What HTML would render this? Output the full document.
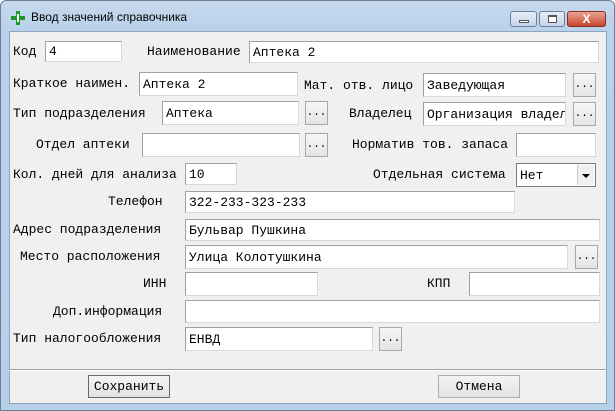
<!DOCTYPE html>
<html><head><meta charset="utf-8"><style>
*{box-sizing:border-box;margin:0;padding:0}
body{width:615px;height:411px;overflow:hidden;background:#fff;font-family:"Liberation Mono","DejaVu Sans Mono",monospace;font-size:13px;color:#000}
.win{position:absolute;left:0;top:0;width:615px;height:411px;border-radius:6px 6px 0 0;background:linear-gradient(#c6d9ee,#b9d1ea 30px,#b7cfe8);border:1px solid #6b7f98}
.title{position:absolute;left:30px;top:9px;font-family:"Liberation Sans",sans-serif;font-size:12px;color:#000}
.client{position:absolute;left:8px;top:30px;width:598px;height:373px;background:#f0f0f0;border:1px solid #8fa4bd}
.a{position:absolute;white-space:nowrap}
.l{position:absolute;white-space:nowrap;line-height:16px}
.i{position:absolute;background:#fff;border:1px solid #d8d8d8;border-top-color:#a0a0a0;border-left-color:#a0a0a0;padding-left:3px;display:flex;align-items:center;overflow:hidden;white-space:nowrap}
.b{position:absolute;width:23px;height:24px;background:linear-gradient(#f6f6f6,#e4e4e4);border:1px solid #a8a8a8;text-align:center;font-size:11px;line-height:22px}
.btn{position:absolute;height:23px;background:linear-gradient(#f4f4f4,#e2e2e2);border:1px solid #8e8e8e;text-align:center;line-height:21px}
.wb{position:absolute;top:10px;height:16px;border:1px solid #6d7f99;border-radius:3px;background:linear-gradient(#e6eef8,#c3d3e7)}
</style></head><body>
<div class="win">
<svg style="position:absolute;left:10px;top:10px" width="14" height="14"><path d="M5 0h4v5h5v4H9v5H5V9H0V5h5z" fill="#1a9a2a"/><path d="M6 3h2v8H6z" fill="#fff"/></svg>
<div class="title">Ввод значений справочника</div>
<div class="wb" style="left:509px;width:27px"><div style="position:absolute;left:8px;top:8px;width:10px;height:3px;background:#fff;border:1px solid #555"></div></div>
<div class="wb" style="left:538px;width:26px"><div style="position:absolute;left:8px;top:3px;width:9px;height:8px;background:#fff;border:1px solid #555;border-top-width:2px"></div></div>
<div class="wb" style="left:566px;width:39px;background:linear-gradient(#e8a293,#c9462f);border-color:#8a2b1e;color:#fff;font:bold 12px 'Liberation Sans',sans-serif;text-align:center;line-height:14px">X</div>
<div class="client"></div>
</div>
<div class="l" style="left:13px;top:44px">Код</div>
<div class="i" style="left:45px;top:41px;width:77px;height:21px">4</div>
<div class="l" style="left:147px;top:44px">Наименование</div>
<div class="i" style="left:249px;top:41px;width:350px;height:22px">Аптека 2</div>
<div class="l" style="left:13px;top:76px">Краткое наимен.</div>
<div class="i" style="left:139px;top:72px;width:159px;height:24px">Аптека 2</div>
<div class="l" style="left:304px;top:78px">Мат. отв. лицо</div>
<div class="i" style="left:423px;top:73px;width:143px;height:24px">Заведующая</div>
<div class="b" style="left:573px;top:73px">...</div>
<div class="l" style="left:13px;top:106px">Тип подразделения</div>
<div class="i" style="left:162px;top:101px;width:137px;height:24px">Аптека</div>
<div class="b" style="left:305px;top:101px">...</div>
<div class="l" style="left:349px;top:106px">Владелец</div>
<div class="i" style="left:423px;top:102px;width:143px;height:24px">Организация владелец</div>
<div class="b" style="left:573px;top:102px">...</div>
<div class="l" style="left:36px;top:137px">Отдел аптеки</div>
<div class="i" style="left:142px;top:133px;width:158px;height:24px"></div>
<div class="b" style="left:305px;top:133px">...</div>
<div class="l" style="left:352px;top:137px">Норматив тов. запаса</div>
<div class="i" style="left:516px;top:133px;width:80px;height:24px"></div>
<div class="l" style="left:13px;top:167px">Кол. дней для анализа</div>
<div class="i" style="left:185px;top:163px;width:52px;height:22px">10</div>
<div class="l" style="left:373px;top:167px">Отдельная система</div>
<div class="i" style="left:516px;top:163px;width:80px;height:24px;border:1px solid #7a7a7a">Нет<div style="position:absolute;right:1px;top:1px;width:17px;height:20px;background:#f0f0f0;border-left:1px solid #ccc"><svg width="17" height="20"><path d="M4 9h8l-4 4z" fill="#000"/></svg></div></div>
<div class="l" style="left:108px;top:194px">Телефон</div>
<div class="i" style="left:185px;top:191px;width:330px;height:22px">322-233-323-233</div>
<div class="l" style="left:13px;top:222px">Адрес подразделения</div>
<div class="i" style="left:185px;top:219px;width:415px;height:22px">Бульвар Пушкина</div>
<div class="l" style="left:20px;top:249px">Место расположения</div>
<div class="i" style="left:185px;top:245px;width:383px;height:24px">Улица Колотушкина</div>
<div class="b" style="left:575px;top:245px">...</div>
<div class="l" style="left:143px;top:276px">ИНН</div>
<div class="i" style="left:185px;top:272px;width:133px;height:24px"></div>
<div class="l" style="left:427px;top:276px">КПП</div>
<div class="i" style="left:469px;top:272px;width:131px;height:24px"></div>
<div class="l" style="left:53px;top:304px">Доп.информация</div>
<div class="i" style="left:185px;top:300px;width:415px;height:23px"></div>
<div class="l" style="left:13px;top:331px">Тип налогообложения</div>
<div class="i" style="left:185px;top:327px;width:188px;height:24px">ЕНВД</div>
<div class="b" style="left:379px;top:327px">...</div>
<div class="a" style="left:9px;top:369px;width:597px;border-top:1px solid #a0a0a0;border-bottom:1px solid #fff"></div>
<div class="btn" style="left:88px;top:375px;width:82px;border-color:#6a6a6a">Сохранить</div>
<div class="btn" style="left:438px;top:375px;width:82px;border-color:#adadad">Отмена</div>
</body></html>
